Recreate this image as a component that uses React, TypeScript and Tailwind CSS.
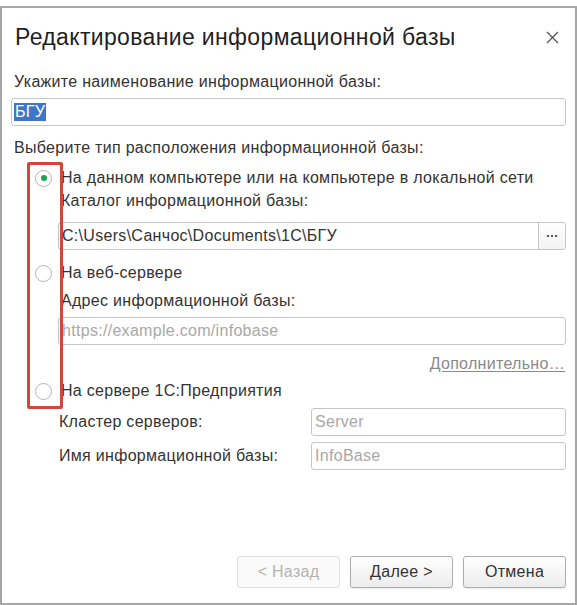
const font = { fontFamily: '"Liberation Sans", Arial, sans-serif' };

const Radio = ({ checked = false }: { checked?: boolean }) => (
  <span className="w-[17px] h-[17px] rounded-full border border-[#b5b5b5] bg-white flex items-center justify-center shrink-0">
    {checked && <span className="w-[6px] h-[6px] rounded-full bg-[#16a34a]" />}
  </span>
);

const Field = ({ value, placeholder, className = "" }: { value?: string; placeholder?: string; className?: string }) => (
  <div className={`h-[28px] border border-[#c6c6c6] rounded-[3px] bg-white flex items-center px-[3px] ${className}`}>
    {value ? (
      <span className="text-[#333]">{value}</span>
    ) : (
      <span className="text-[#a8a8a8]">{placeholder}</span>
    )}
  </div>
);

const Button = ({ label, disabled = false }: { label: string; disabled?: boolean }) => (
  <button
    className={`w-[103px] h-[32px] rounded-[3px] border text-[16px] ${
      disabled
        ? "border-[#dedede] text-[#b3b3b3] bg-[#fafafa]"
        : "border-[#adadad] text-[#333] bg-gradient-to-b from-white to-[#ececec] shadow-[0_1px_1px_rgba(0,0,0,0.08)]"
    }`}
  >
    {label}
  </button>
);

export default function App() {
  return (
    <div
      className="w-[577px] h-[605px] bg-white pt-[6px] text-[16px] leading-[20px] tracking-[0.3px] text-[#333]"
      style={font}
    >
      <div className="relative h-[599px] border-2 border-[#a6a6a6] flex flex-col px-[9px]">
        {/* header */}
        <div className="mt-[14px] h-[30px] flex items-center justify-between pl-[4px] pr-[7px]">
          <h1 className="text-[23px] leading-[30px] tracking-[0.35px] text-[#1f1f1f]">Редактирование информационной базы</h1>
          <svg width="13" height="13" viewBox="0 0 13 13" className="text-[#555]">
            <path d="M1 1L12 12M12 1L1 12" stroke="currentColor" strokeWidth="1.3" />
          </svg>
        </div>

        <div className="mt-[20px] pl-[3px]">Укажите наименование информационной базы:</div>
        <div className="mt-[6px] h-[28px] border border-[#c6c6c6] rounded-[3px] bg-white flex items-center px-[2px]">
          <span className="bg-[#3f77c8] text-white px-[1px] leading-[18px]">БГУ</span>
        </div>

        <div className="mt-[12px] pl-[3px]">Выберите тип расположения информационной базы:</div>

        {/* local */}
        <div className="mt-[10px] flex items-center">
          <div className="w-[47px] flex justify-end pr-[6px]">
            <Radio checked />
          </div>
          <span className="pl-[3px]">На данном компьютере или на компьютере в локальной сети</span>
        </div>
        <div className="mt-[3px] pl-[50px]">Каталог информационной базы:</div>
        <div className="mt-[11px] ml-[47px] h-[28px] border border-[#c6c6c6] rounded-[3px] bg-white flex">
          <span className="flex-1 flex items-center px-[3px]">C:\Users\Санчос\Documents\1C\БГУ</span>
          <span className="w-[27px] border-l border-[#c6c6c6] flex items-center justify-center gap-[2px] bg-gradient-to-b from-white to-[#f2f2f2] rounded-r-[3px]">
            <span className="w-[2px] h-[2px] bg-[#555]" />
            <span className="w-[2px] h-[2px] bg-[#555]" />
            <span className="w-[2px] h-[2px] bg-[#555]" />
          </span>
        </div>

        {/* web server */}
        <div className="mt-[13px] flex items-center">
          <div className="w-[47px] flex justify-end pr-[6px]">
            <Radio />
          </div>
          <span className="pl-[3px]">На веб-сервере</span>
        </div>
        <div className="mt-[8px] pl-[50px]">Адрес информационной базы:</div>
        <Field placeholder="https://example.com/infobase" className="mt-[6px] ml-[47px]" />
        <div className="mt-[9px] flex justify-end pr-[1px]">
          <span className="text-[#8a8a8a] underline underline-offset-[2px]">Дополнительно…</span>
        </div>

        {/* 1C server */}
        <div className="mt-[7px] flex items-center">
          <div className="w-[47px] flex justify-end pr-[6px]">
            <Radio />
          </div>
          <span className="pl-[3px]">На сервере 1С:Предприятия</span>
        </div>
        <div className="mt-[7px] ml-[47px] flex items-center">
          <span className="w-[253px] pl-[1px]">Кластер серверов:</span>
          <Field placeholder="Server" className="flex-1" />
        </div>
        <div className="mt-[6px] ml-[47px] flex items-center">
          <span className="w-[253px] pl-[1px]">Имя информационной базы:</span>
          <Field placeholder="InfoBase" className="flex-1" />
        </div>

        <div className="flex-1" />
        <div className="mb-[15px] flex justify-end gap-[10px]">
          <Button label="< Назад" disabled />
          <Button label="Далее >" />
          <Button label="Отмена" />
        </div>

        {/* highlight frame over the radio column */}
        <div className="absolute left-[25px] top-[154px] w-[36px] h-[247px] border-[3px] border-[#d2473c] rounded-[2px] pointer-events-none" />
      </div>
    </div>
  );
}
